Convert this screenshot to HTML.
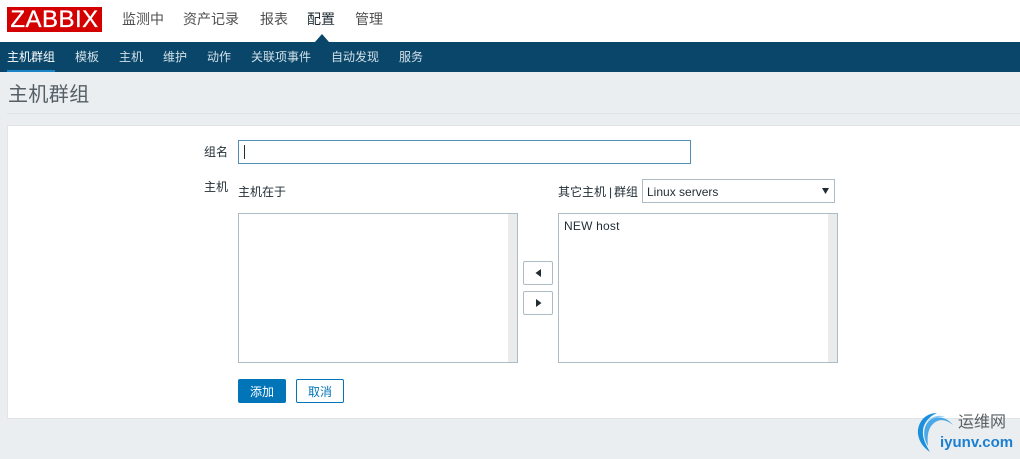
<!DOCTYPE html>
<html><head><meta charset="utf-8">
<style>
html,body{margin:0;padding:0}
body{width:1020px;height:459px;overflow:hidden;position:relative;background:#ebeef0;font-family:"Liberation Sans","Noto Sans CJK SC",sans-serif;color:#1f2c33}
.a{position:absolute;white-space:nowrap}
.t{font-size:14px;line-height:20px;top:9px;color:#4f4f4f}
.s{font-size:12px;line-height:16px;top:49px;color:#d1e0e8}
.l{font-size:12px;line-height:16px;color:#1f2c33}
.box{position:absolute;box-sizing:border-box;border:1px solid #acbbc4;background:#fff}
.sb{position:absolute;top:0;right:0;bottom:0;width:9px;background:#ebebeb}
.ab{position:absolute;box-sizing:border-box;left:523px;width:30px;height:24px;border:1px solid #acbbc4;border-radius:2px;background:#fff}
</style></head><body>
<div class="a" style="left:0;top:0;width:1020px;height:42px;background:#fff"></div>
<div class="a" style="left:7px;top:7px;width:95px;height:25px;overflow:hidden;background:#d40000;color:#fff;font-size:24px;line-height:26px;text-align:center;letter-spacing:.5px;-webkit-text-stroke:.3px #fff">ZABBIX</div>
<div class="a t" style="left:122px">监测中</div>
<div class="a t" style="left:183px">资产记录</div>
<div class="a t" style="left:260px">报表</div>
<div class="a t" style="left:307px;color:#1f2c33">配置</div>
<div class="a t" style="left:355px">管理</div>
<div class="a" style="left:0;top:42px;width:1020px;height:30px;background:#0a466a"></div>
<svg class="a" style="left:314px;top:33px" width="16" height="9"><path d="M1 9L8 1L15 9Z" fill="#0a466a"/></svg>
<div class="a s" style="left:7px;color:#fff">主机群组</div>
<div class="a" style="left:7px;top:70px;width:48px;height:2px;background:#1a84c7"></div>
<div class="a s" style="left:75px">模板</div>
<div class="a s" style="left:119px">主机</div>
<div class="a s" style="left:163px">维护</div>
<div class="a s" style="left:207px">动作</div>
<div class="a s" style="left:251px">关联项事件</div>
<div class="a s" style="left:331px">自动发现</div>
<div class="a s" style="left:399px">服务</div>
<div class="a" style="left:8px;top:82px;font-size:20px;line-height:26px;color:#555f66;letter-spacing:.4px">主机群组</div>
<div class="a" style="left:7px;top:113px;width:1013px;height:1px;background:#dfe4e7"></div>
<div class="a" style="left:7px;top:125px;width:1013px;height:294px;box-sizing:border-box;background:#fff;border:1px solid #dfe4e7;border-right:0"></div>
<div class="a l" style="left:204px;top:144px">组名</div>
<div class="a" style="box-sizing:border-box;left:238px;top:140px;width:453px;height:24px;border:1px solid #4f8fb3;background:#fff"></div>
<div class="a" style="left:244px;top:145px;width:1px;height:14px;background:#1f2c33"></div>
<div class="a l" style="left:204px;top:179px">主机</div>
<div class="a l" style="left:238px;top:184px">主机在于</div>
<div class="a l" style="left:558px;top:184px">其它主机</div>
<div class="a l" style="left:609px;top:184px">|</div>
<div class="a l" style="left:614px;top:184px">群组</div>
<div class="box" style="left:642px;top:179px;width:193px;height:24px"></div>
<div class="a l" style="left:647px;top:184px">Linux servers</div>
<svg class="a" style="left:821px;top:187px" width="9" height="8"><path d="M1 1H8L4.5 7Z" fill="#1f2c33"/></svg>
<div class="box" style="left:238px;top:213px;width:280px;height:150px"><div class="sb"></div></div>
<div class="box" style="left:558px;top:213px;width:280px;height:150px"><div class="sb"></div></div>
<div class="a l" style="left:564px;top:218px;letter-spacing:.2px">NEW host</div>
<div class="ab" style="top:261px"><svg style="position:absolute;left:10px;top:6px" width="9" height="10"><path d="M7 1V9L1.5 5Z" fill="#1f2c33"/></svg></div>
<div class="ab" style="top:291px"><svg style="position:absolute;left:10px;top:6px" width="9" height="10"><path d="M2 1V9L7.5 5Z" fill="#1f2c33"/></svg></div>
<div class="a" style="left:238px;top:379px;width:48px;height:24px;background:#0275b8;border-radius:2px;color:#fff;font-size:12px;line-height:26px;text-align:center">添加</div>
<div class="a" style="box-sizing:border-box;left:296px;top:379px;width:48px;height:24px;border:1px solid #0275b8;border-radius:2px;background:#fff;color:#0275b8;font-size:12px;line-height:24px;text-align:center">取消</div>
<svg class="a" style="left:910px;top:405px" width="50" height="54"><path d="M27 8C14 8 7 19 8 29C9 37 14 43 20 47C16 40 12 33 13 25C14 17 20 11 27 8Z" fill="#1a8fdc"/><path d="M43 20C36 11 25 10 18 17C13 23 13 33 18 41C17 31 18 23 24 18C30 13 37 15 43 20Z" fill="#4aa8e6"/><path d="M35 12C28 9 21 12 17 17C22 13 29 11 35 12Z" fill="#8fcdf2"/></svg>
<div class="a" style="left:958px;top:413px;font-size:16px;line-height:20px;color:#5a5f63">运维网</div>
<div class="a" style="left:940px;top:433px;font-size:15px;line-height:20px;font-weight:bold;color:#1a7fd0">iyunv.com</div>
</body></html>
